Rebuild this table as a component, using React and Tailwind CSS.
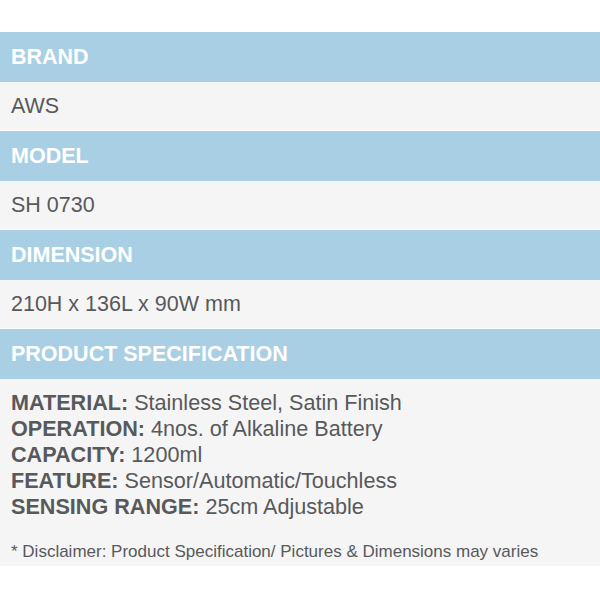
const rows = [
  { title: 'BRAND', value: 'AWS' },
  { title: 'MODEL', value: 'SH 0730' },
  { title: 'DIMENSION', value: '210H x 136L x 90W mm' },
];

const specs = [
  { label: 'MATERIAL:', value: 'Stainless Steel, Satin Finish' },
  { label: 'OPERATION:', value: '4nos. of Alkaline Battery' },
  { label: 'CAPACITY:', value: '1200ml' },
  { label: 'FEATURE:', value: 'Sensor/Automatic/Touchless' },
  { label: 'SENSING RANGE:', value: '25cm Adjustable' },
];

function Header({ children }) {
  return (
    <div className="h-[50px] flex items-center px-[11px] bg-[#a9cfe4] text-white font-bold text-[21.5px]">
      {children}
    </div>
  );
}

export default function App() {
  return (
    <div className="w-[600px] h-[600px] bg-white pt-[32px] text-[#58595b] font-['Liberation_Sans',Arial,sans-serif]">
      {rows.map((row) => (
        <div key={row.title}>
          <Header>{row.title}</Header>
          <div className="h-[49px] flex items-center px-[11px] bg-[#f5f5f5] border-b border-white text-[21.5px]">
            {row.value}
          </div>
        </div>
      ))}

      <Header>PRODUCT SPECIFICATION</Header>
      <div className="bg-[#f5f5f5] px-[11px] pt-[11px] pb-[4px]">
        <div className="text-[21.6px] leading-[26px]">
          {specs.map((s) => (
            <div key={s.label}>
              <span className="font-bold">{s.label}</span> {s.value}
            </div>
          ))}
        </div>
        <p className="mt-[22px] text-[17px] leading-[20px]">
          * Disclaimer: Product Specification/ Pictures &amp; Dimensions may varies
        </p>
      </div>
    </div>
  );
}
